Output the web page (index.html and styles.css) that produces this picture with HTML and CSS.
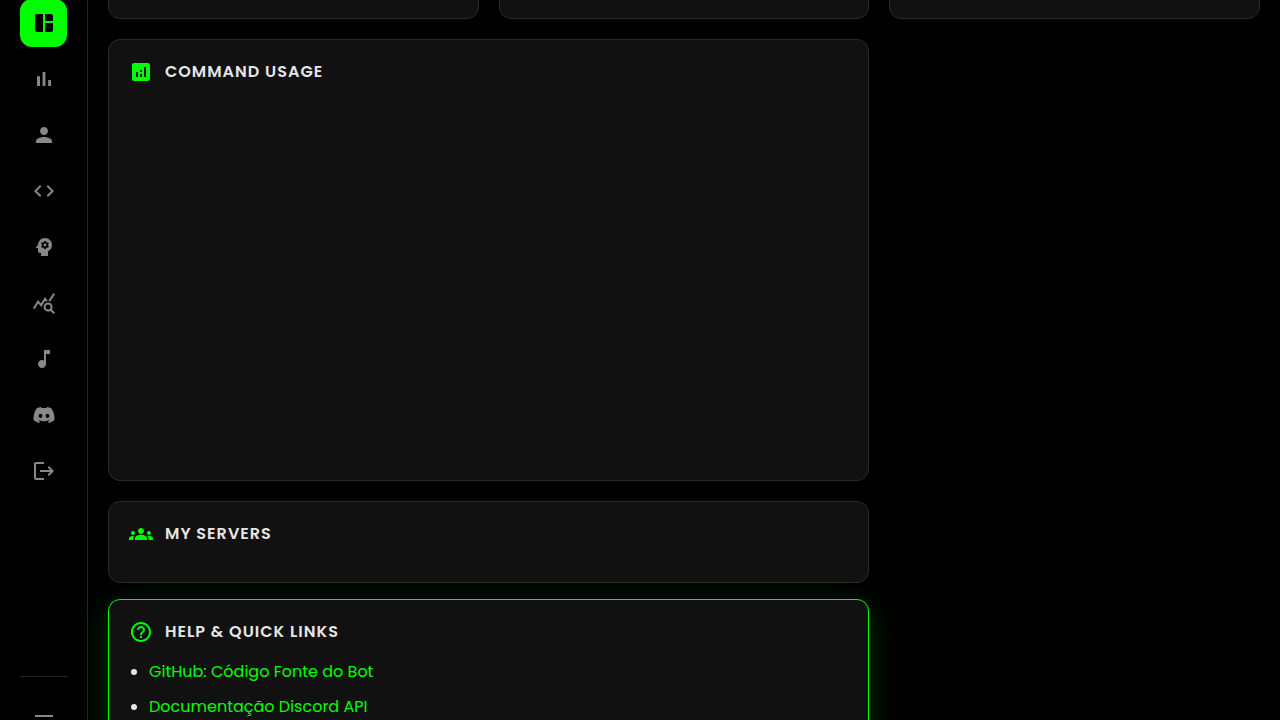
FILE: index.html
```html
<!DOCTYPE html>
<html lang="pt">
<head>
<meta charset="utf-8">
<meta name="viewport" content="width=device-width, initial-scale=1">
<title>Dashboard</title>
<link rel="stylesheet" href="styles.css">
</head>
<body>
<div class="app">
  <aside class="sidebar">
    <nav class="nav" aria-label="Main">
      <a class="nav-link active" href="#dashboard" aria-label="Dashboard"><svg class="icon" viewBox="0 0 24 24"><path d="M11 21H5c-1.1 0-2-.9-2-2V5c0-1.1.9-2 2-2h6v18zm2 0h6c1.1 0 2-.9 2-2v-7h-8v9zm8-11V5c0-1.1-.9-2-2-2h-6v7h8z"/></svg></a>
      <a class="nav-link" href="#stats" aria-label="Statistics"><svg class="icon" viewBox="0 0 24 24"><path d="M5 9.2h3V19H5zM10.6 5h2.8v14h-2.8zm5.6 8H19v6h-2.8z"/></svg></a>
      <a class="nav-link" href="#profile" aria-label="Profile"><svg class="icon" viewBox="0 0 24 24"><path d="M12 12c2.21 0 4-1.79 4-4s-1.79-4-4-4-4 1.79-4 4 1.79 4 4 4zm0 2c-2.67 0-8 1.34-8 4v2h16v-2c0-2.66-5.33-4-8-4z"/></svg></a>
      <a class="nav-link" href="#commands" aria-label="Commands"><svg class="icon" viewBox="0 0 24 24"><path d="M9.4 16.6 4.8 12l4.6-4.6L8 6l-6 6 6 6 1.4-1.4zm5.2 0 4.6-4.6-4.6-4.6L16 6l6 6-6 6-1.4-1.4z"/></svg></a>
      <a class="nav-link" href="#ai" aria-label="AI"><svg class="icon" viewBox="0 0 24 24"><path d="M13 8.57c-.79 0-1.43.64-1.43 1.43s.64 1.43 1.43 1.43 1.43-.64 1.43-1.43-.64-1.43-1.43-1.43z"/><path d="M13 3C9.25 3 6.2 5.94 6.02 9.64L4.1 12.2c-.25.33-.01.8.4.8H6v3c0 1.1.9 2 2 2h1v3h7v-4.68c2.36-1.12 4-3.53 4-6.32 0-3.87-3.13-7-7-7zm3 7c0 .13-.01.26-.02.39l.83.66c.08.06.1.16.05.25l-.8 1.39c-.05.09-.16.12-.24.09l-.99-.4c-.21.16-.43.29-.67.39L14 13.83c-.01.1-.1.17-.2.17h-1.6c-.1 0-.18-.07-.2-.17l-.15-1.06c-.25-.1-.47-.23-.68-.39l-.99.4c-.09.03-.2 0-.25-.09l-.8-1.39c-.05-.08-.03-.19.05-.25l.84-.66c-.01-.13-.02-.26-.02-.39s.02-.27.04-.39l-.85-.66c-.08-.06-.1-.16-.05-.26l.8-1.38c.05-.09.15-.12.24-.09l1 .4c.2-.15.43-.29.67-.39L12 6.17c.02-.1.1-.17.2-.17h1.6c.1 0 .18.07.2.17l.15 1.06c.24.1.46.23.67.39l1-.4c.09-.03.2 0 .24.09l.8 1.38c.05.09.03.2-.05.26l-.85.66c.03.12.04.25.04.39z"/></svg></a>
      <a class="nav-link" href="#insights" aria-label="Insights"><svg class="icon" viewBox="0 0 24 24"><path d="M19.88 18.47c.44-.7.7-1.51.7-2.39 0-2.49-2.01-4.5-4.5-4.5s-4.5 2.01-4.5 4.5 2.01 4.5 4.49 4.5c.88 0 1.7-.26 2.39-.7L21.58 23 23 21.58l-3.12-3.11zm-3.8.11a2.5 2.5 0 1 1 0-5 2.5 2.5 0 0 1 0 5zm-.36-8.5c-.74.02-1.45.18-2.1.45l-.55-.83-3.8 6.18-3.01-3.52-3.63 5.81L1 17l5-8 3 3.5L13 6l2.72 4.08zm2.59.5c-.64-.28-1.33-.45-2.05-.49L21.38 2 23 3.18l-4.69 7.4z"/></svg></a>
      <a class="nav-link" href="#music" aria-label="Music"><svg class="icon" viewBox="0 0 24 24"><path d="M12 3v10.55c-.59-.34-1.27-.55-2-.55-2.21 0-4 1.79-4 4s1.79 4 4 4 4-1.79 4-4V7h4V3h-6z"/></svg></a>
      <a class="nav-link" href="#discord" aria-label="Discord"><svg class="icon" viewBox="0 0 24 24"><path fill-rule="evenodd" d="M19.27 5.33C17.94 4.71 16.5 4.26 15 4a.09.09 0 0 0-.07.03c-.18.33-.39.76-.53 1.09a16.09 16.09 0 0 0-4.8 0c-.14-.34-.35-.76-.54-1.09-.01-.02-.04-.03-.07-.03-1.5.26-2.93.71-4.27 1.33-.01 0-.02.01-.03.02C1.97 9.42 1.22 13.38 1.59 17.3c0 .02.01.04.03.05 1.8 1.32 3.53 2.12 5.24 2.65.03.01.06 0 .07-.02.4-.55.76-1.13 1.07-1.74.02-.04 0-.08-.04-.09-.57-.22-1.11-.48-1.64-.78-.04-.02-.04-.08-.01-.11.11-.08.22-.17.33-.25.02-.02.05-.02.07-.01 3.44 1.57 7.15 1.57 10.55 0 .02-.01.05-.01.07.01.11.09.22.17.33.26.04.03.04.09-.01.11-.52.31-1.07.56-1.64.78-.04.01-.05.06-.04.09.32.61.68 1.19 1.07 1.74.03.01.06.02.09.01 1.72-.53 3.45-1.33 5.25-2.65.02-.01.03-.03.03-.05.44-4.53-.73-8.46-3.1-11.95-.01-.01-.02-.02-.04-.02zM8.52 14.91c-1.03 0-1.89-.95-1.89-2.12s.84-2.12 1.89-2.12c1.06 0 1.9.96 1.89 2.12 0 1.17-.84 2.12-1.89 2.12zm6.97 0c-1.03 0-1.89-.95-1.89-2.12s.84-2.12 1.89-2.12c1.06 0 1.9.96 1.89 2.12 0 1.17-.83 2.12-1.89 2.12z"/></svg></a>
      <a class="nav-link" href="#logout" aria-label="Log out"><svg class="icon" viewBox="0 0 24 24"><path d="m17 7-1.41 1.41L18.17 11H8v2h10.17l-2.58 2.58L17 17l5-5-5-5zM4 5h8V3H4c-1.1 0-2 .9-2 2v14c0 1.1.9 2 2 2h8v-2H4V5z"/></svg></a>
    </nav>
    <div class="sidebar-footer">
      <button class="nav-link" type="button" aria-label="Toggle menu"><svg class="icon" viewBox="0 0 24 24"><path d="M3 18h18v-2H3v2zm0-5h18v-2H3v2zm0-7v2h18V6H3z"/></svg></button>
    </div>
  </aside>
  <main class="content">
    <section class="card summary"></section>
    <section class="card summary"></section>
    <section class="card summary"></section>
    <section class="card wide">
      <h2 class="card-title"><svg class="icon" viewBox="0 0 24 24"><path d="M19 3H5c-1.1 0-2 .9-2 2v14c0 1.1.9 2 2 2h14c1.1 0 2-.9 2-2V5c0-1.1-.9-2-2-2zM9 17H7v-5h2v5zm4 0h-2v-3h2v3zm0-5h-2v-2h2v2zm4 5h-2V7h2v10z"/></svg>Command Usage</h2>
      <div class="chart"></div>
    </section>
    <section class="card wide">
      <h2 class="card-title"><svg class="icon" viewBox="0 0 24 24"><path d="M12 12.75c1.63 0 3.07.39 4.24.9 1.08.48 1.76 1.56 1.76 2.73V18H6v-1.61c0-1.18.68-2.26 1.76-2.73 1.17-.52 2.61-.91 4.24-.91zM4 13c1.1 0 2-.9 2-2s-.9-2-2-2-2 .9-2 2 .9 2 2 2zm1.13 1.1c-.37-.06-.74-.1-1.13-.1-.99 0-1.93.21-2.78.58A2.01 2.01 0 0 0 0 16.43V18h4.5v-1.61c0-.83.23-1.61.63-2.29zM20 13c1.1 0 2-.9 2-2s-.9-2-2-2-2 .9-2 2 .9 2 2 2zm4 3.43c0-.81-.48-1.53-1.22-1.85A6.95 6.95 0 0 0 20 14c-.39 0-.76.04-1.13.1.4.68.63 1.46.63 2.29V18H24v-1.57zM12 6c1.66 0 3 1.34 3 3s-1.34 3-3 3-3-1.34-3-3 1.34-3 3-3z"/></svg>My Servers</h2>
    </section>
    <section class="card wide raised">
      <h2 class="card-title"><svg class="icon" viewBox="0 0 24 24"><path d="M11 18h2v-2h-2v2zm1-16C6.48 2 2 6.48 2 12s4.48 10 10 10 10-4.48 10-10S17.52 2 12 2zm0 18c-4.41 0-8-3.59-8-8s3.59-8 8-8 8 3.59 8 8-3.59 8-8 8zm0-14c-2.21 0-4 1.79-4 4h2c0-1.1.9-2 2-2s2 .9 2 2c0 2-3 1.75-3 5h2c0-2.25 3-2.5 3-5 0-2.21-1.79-4-4-4z"/></svg>Help &amp; Quick Links</h2>
      <ul class="links">
        <li><a href="#github">GitHub: Código Fonte do Bot</a></li>
        <li><a href="#docs">Documentação Discord API</a></li>
      </ul>
    </section>
  </main>
</div>
</body>
</html>
```
FILE: styles.css
```css
* {
  box-sizing: border-box;
}

body {
  margin: 0;
  background: #000;
  color: #e6e6e6;
  font-family: Poppins, "Open Sans", sans-serif;
  font-size: 16px;
  line-height: 24px;
}

.app {
  display: flex;
  align-items: flex-start;
  height: 100vh;
  overflow: hidden;
}

.icon {
  width: 24px;
  height: 24px;
  flex: none;
  fill: currentColor;
}

.sidebar {
  display: flex;
  flex-direction: column;
  justify-content: space-between;
  flex: none;
  width: 88px;
  height: calc(100vh + 66px);
  margin-top: -21px;
  padding: 20px;
  border-right: 1px solid #222;
}

.nav {
  display: flex;
  flex-direction: column;
  gap: 8px;
}

.nav-link {
  display: flex;
  align-items: center;
  justify-content: center;
  width: 100%;
  height: 48px;
  padding: 0;
  border: 0;
  border-radius: 12px;
  background: none;
  color: #888;
}

.nav-link.active {
  background: #0f0;
  color: #000;
}

.sidebar-footer {
  padding-top: 20px;
  border-top: 1px solid #222;
}

.content {
  flex: 1;
  display: grid;
  grid-template-columns: repeat(3, 1fr);
  gap: 20px;
  margin-top: -121px;
  padding: 20px;
}

.card {
  padding: 20px;
  border: 1px solid #2a2a2a;
  border-radius: 12px;
  background: #111;
}

.summary {
  min-height: 120px;
}

.wide {
  grid-column: 1 / 3;
}

.raised {
  border-color: #0f0;
  box-shadow: 0 8px 32px rgba(0, 255, 0, 0.2);
  transform: translateY(-4px);
}

.card-title {
  display: flex;
  align-items: center;
  gap: 12px;
  margin: 0 0 16px;
  font-size: 16px;
  font-weight: 600;
  letter-spacing: 1px;
  text-transform: uppercase;
}

.card-title .icon {
  color: #0f0;
}

.chart {
  height: 360px;
}

.links {
  margin: 0;
  padding-left: 20px;
}

.links li {
  margin-bottom: 11px;
}

.links a {
  color: #0f0;
  text-decoration: none;
}
```
